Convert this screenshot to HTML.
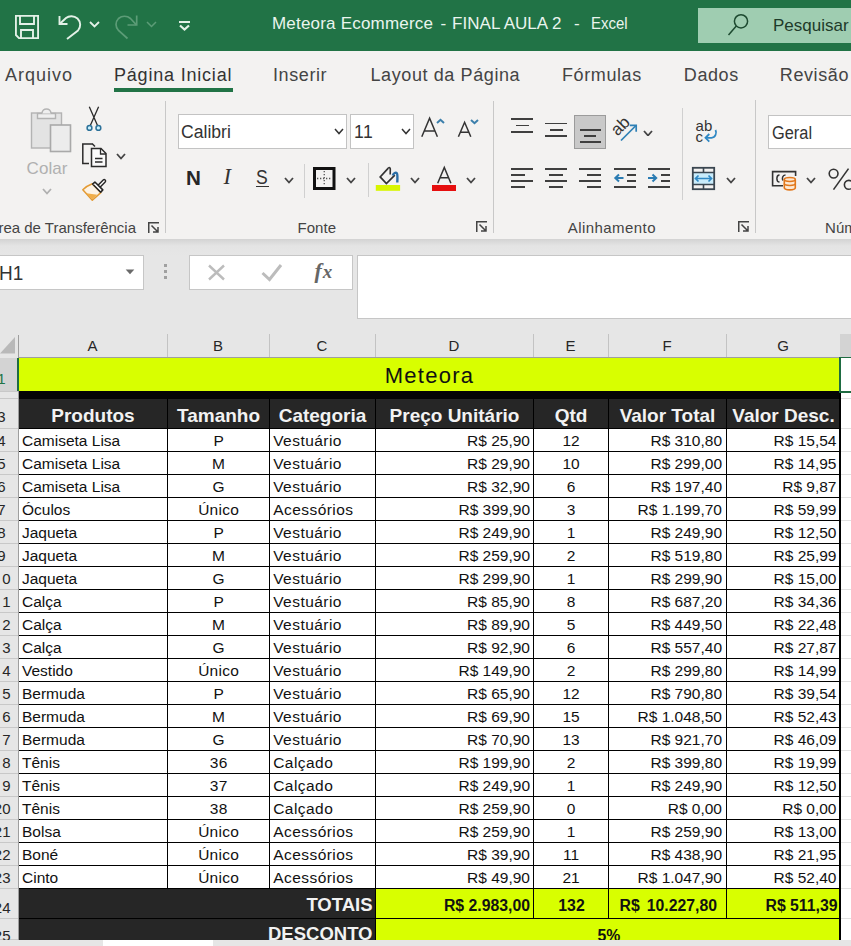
<!DOCTYPE html><html><head><meta charset="utf-8"><style>html,body{margin:0;padding:0;width:851px;height:946px;overflow:hidden;background:#fff;position:relative}</style></head><body><div style="position:absolute;left:0px;top:0px;width:851px;height:51px;background:#217346;"></div>
<svg style="position:absolute;left:15px;top:15px" width="24" height="24" viewBox="0 0 24 24" fill="none"><path d="M0.9 0.9 H23.1 V23.1 H4 L0.9 20 Z" stroke="#e3f1e7" stroke-width="1.9"/><path d="M5 1 V9 H19 V1" stroke="#e3f1e7" stroke-width="1.9"/><path d="M6 23 V15 H18 V23" stroke="#e3f1e7" stroke-width="1.9"/></svg>
<svg style="position:absolute;left:58px;top:14px" width="25" height="26" viewBox="0 0 25 26" fill="none"><path d="M1.5 2 V10 H9.5" stroke="#e3f1e7" stroke-width="1.9"/><path d="M1.8 9.8 L8 4 C11 1.5 16 1.5 19.5 4.5 C23 8 23 13 20 16.5 L9 25" stroke="#e3f1e7" stroke-width="1.9"/></svg>
<svg style="position:absolute;left:89px;top:21px" width="11" height="7" viewBox="0 0 11 7" fill="none"><path d="M1 1 L5.5 5.5 L10 1" stroke="#e3f1e7" stroke-width="1.8"/></svg>
<svg style="position:absolute;left:114px;top:14px" width="26" height="26" viewBox="0 0 26 26" fill="none"><path d="M22.7 1.5 V11 H13.5" stroke="#5c9c77" stroke-width="1.7"/><path d="M22.4 10.8 L16.5 4.5 C13 1.5 8 1.5 4.5 4.5 C1.2 8 1.2 13 4.5 16.5 L13.5 24.5" stroke="#5c9c77" stroke-width="1.7"/></svg>
<svg style="position:absolute;left:146px;top:21px" width="11" height="7" viewBox="0 0 11 7" fill="none"><path d="M1 1 L5.5 5.5 L10 1" stroke="#5c9c77" stroke-width="1.5"/></svg>
<svg style="position:absolute;left:178px;top:19px" width="13" height="13" viewBox="0 0 13 13" fill="none"><path d="M1 3 H12" stroke="#e3f1e7" stroke-width="2"/><path d="M2 6.5 L6.5 10.5 L11 6.5" stroke="#e3f1e7" stroke-width="2.2"/></svg>
<div style='position:absolute;top:15.31px;font-size:17px;line-height:17px;color:#eaf5ee;font-weight:400;white-space:pre;letter-spacing:0.2px;left:272px;font-family:"Liberation Sans", sans-serif;'>Meteora Ecommerce</div>
<div style='position:absolute;top:15.31px;font-size:17px;line-height:17px;color:#eaf5ee;font-weight:400;white-space:pre;left:440.5px;font-family:"Liberation Sans", sans-serif;'>-</div>
<div style='position:absolute;top:15.31px;font-size:17px;line-height:17px;color:#eaf5ee;font-weight:400;white-space:pre;letter-spacing:0.05px;left:452px;font-family:"Liberation Sans", sans-serif;'>FINAL AULA 2</div>
<div style='position:absolute;top:15.31px;font-size:17px;line-height:17px;color:#eaf5ee;font-weight:400;white-space:pre;left:574px;font-family:"Liberation Sans", sans-serif;'>-</div>
<div style='position:absolute;top:15.31px;font-size:17px;line-height:17px;color:#eaf5ee;font-weight:400;white-space:pre;left:591px;transform:scaleX(0.88);transform-origin:left top;font-family:"Liberation Sans", sans-serif;'>Excel</div>
<div style="position:absolute;left:698px;top:8px;width:153px;height:35px;background:#9fcdb1;"></div>
<svg style="position:absolute;left:726px;top:13px" width="24" height="24" viewBox="0 0 24 24" fill="none"><circle cx="15" cy="8.3" r="6.6" stroke="#1d4a30" stroke-width="1.5"/><path d="M10.3 13 L2.5 22" stroke="#1d4a30" stroke-width="1.5"/></svg>
<div style='position:absolute;top:17.31px;font-size:17px;line-height:17px;color:#1e3b2a;font-weight:400;white-space:pre;left:773px;font-family:"Liberation Sans", sans-serif;'>Pesquisar</div>
<div style="position:absolute;left:0px;top:51px;width:851px;height:188px;background:#f3f2f1;"></div>
<div style='position:absolute;top:65.76px;font-size:18px;line-height:18px;color:#444444;font-weight:400;white-space:pre;letter-spacing:1.0px;left:5px;font-family:"Liberation Sans", sans-serif;'>Arquivo</div>
<div style='position:absolute;top:65.76px;font-size:18px;line-height:18px;color:#333;font-weight:400;white-space:pre;letter-spacing:0.8px;left:114px;font-family:"Liberation Sans", sans-serif;'>Página Inicial</div>
<div style='position:absolute;top:65.76px;font-size:18px;line-height:18px;color:#444444;font-weight:400;white-space:pre;letter-spacing:0.6px;left:273px;font-family:"Liberation Sans", sans-serif;'>Inserir</div>
<div style='position:absolute;top:65.76px;font-size:18px;line-height:18px;color:#444444;font-weight:400;white-space:pre;letter-spacing:0.6px;left:370.5px;font-family:"Liberation Sans", sans-serif;'>Layout da Página</div>
<div style='position:absolute;top:65.76px;font-size:18px;line-height:18px;color:#444444;font-weight:400;white-space:pre;letter-spacing:0.6px;left:562px;font-family:"Liberation Sans", sans-serif;'>Fórmulas</div>
<div style='position:absolute;top:65.76px;font-size:18px;line-height:18px;color:#444444;font-weight:400;white-space:pre;letter-spacing:0.6px;left:683.8px;font-family:"Liberation Sans", sans-serif;'>Dados</div>
<div style='position:absolute;top:65.76px;font-size:18px;line-height:18px;color:#444444;font-weight:400;white-space:pre;letter-spacing:0.6px;left:779.8px;font-family:"Liberation Sans", sans-serif;'>Revisão</div>
<div style="position:absolute;left:114px;top:88px;width:118.5px;height:4px;background:#217346;"></div>
<svg style="position:absolute;left:29px;top:106px" width="44" height="47" viewBox="0 0 44 47" fill="none"><rect x="2.5" y="7" width="30" height="35" fill="#e3e3e3" stroke="#b3b3b3" stroke-width="1.4"/><path d="M8.5 7.5 H26.5 V12.5 H8.5 Z" fill="#efefef" stroke="#b3b3b3" stroke-width="1.4"/><path d="M13 7.5 C13 1.5 22 1.5 22 7.5" stroke="#b3b3b3" stroke-width="1.4" fill="#efefef"/><rect x="21.5" y="19" width="20" height="26.5" fill="#ececec" stroke="#a9a9a9" stroke-width="1.6"/></svg>
<div style='position:absolute;top:160.21px;font-size:17px;line-height:17px;color:#b0b0b0;font-weight:400;white-space:pre;letter-spacing:0.1px;left:26.5px;font-family:"Liberation Sans", sans-serif;'>Colar</div>
<svg style="position:absolute;left:41.5px;top:188px" width="10" height="6.5" viewBox="0 0 10 6.5" fill="none"><path d="M1 1 L5.0 5.5 L9 1" stroke="#b0b0b0" stroke-width="1.8"/></svg>
<svg style="position:absolute;left:85px;top:106px" width="18" height="26" viewBox="0 0 18 26" fill="none"><path d="M4.3 0.8 L12.4 19.2 M13.6 0.8 L5.4 19.2" stroke="#2a2a2a" stroke-width="1.3"/><circle cx="4.5" cy="21.9" r="2.4" fill="#c9f1ff" stroke="#2c7199" stroke-width="1.5"/><circle cx="13.4" cy="21.9" r="2.4" fill="#c9f1ff" stroke="#2c7199" stroke-width="1.5"/></svg>
<svg style="position:absolute;left:81px;top:142px" width="27" height="26" viewBox="0 0 27 26" fill="none"><path d="M12 2 H1.8 V21.5 H8" stroke="#2b2b2b" stroke-width="1.5"/><path d="M11.5 2 L14 4.5" stroke="#2b2b2b" stroke-width="1.5"/><path d="M10.5 6.5 H20 L25 11.5 V24.5 H10.5 Z" fill="#fafafa" stroke="#2b2b2b" stroke-width="1.5"/><path d="M19.5 6.5 V12 H25" stroke="#2b2b2b" stroke-width="1.3"/><path d="M14 16.5 H21.5 M14 20 H21.5" stroke="#2b2b2b" stroke-width="1.3"/></svg>
<svg style="position:absolute;left:115.5px;top:153px" width="10" height="6.5" viewBox="0 0 10 6.5" fill="none"><path d="M1 1 L5.0 5.5 L9 1" stroke="#444" stroke-width="1.8"/></svg>
<svg style="position:absolute;left:80px;top:176px" width="30" height="28" viewBox="0 0 30 28" fill="none"><path d="M12.3 7.8 C8 9.5 5 11.5 2.8 13.7 L12.3 24.3 L20.8 16.6 Z" fill="#fdf3e4" stroke="#e39a33" stroke-width="1.5" stroke-linejoin="round"/><path d="M6.5 17.2 L12.3 23.3 L17.2 18.8 Z" fill="#f1ae48"/><path d="M19.5 9.8 L24.2 5.0" stroke="#262626" stroke-width="4.2" stroke-linecap="round"/><path d="M19.5 9.8 L24.2 5.0" stroke="#fff" stroke-width="1.3" stroke-linecap="round"/><path d="M12.6 8.0 L14.9 6.0 L22.8 13.9 L20.7 16.2 Z" fill="#fff" stroke="#262626" stroke-width="1.6" stroke-linejoin="round"/></svg>
<div style='position:absolute;top:219.80px;font-size:15px;line-height:15px;color:#444;font-weight:400;white-space:pre;right:715px;font-family:"Liberation Sans", sans-serif;'>Área de Transferência</div>
<svg style="position:absolute;left:148px;top:221.5px" width="12" height="12" viewBox="0 0 12 12" fill="none"><path d="M0.75 11 V0.75 H11" stroke="#444" stroke-width="1.5"/><path d="M3.5 3.5 L10 10 M10 5 V10 H5" stroke="#444" stroke-width="1.5"/></svg>
<div style="position:absolute;left:165px;top:101px;width:1px;height:132px;background:#c8c8c8;"></div>
<div style="position:absolute;left:178px;top:114px;width:169px;height:35px;background:#ffffff;box-sizing:border-box;border:1px solid #c3c3c3;"></div>
<div style='position:absolute;top:124.10px;font-size:17.6px;line-height:17.6px;color:#333;font-weight:400;white-space:pre;left:181px;font-family:"Liberation Sans", sans-serif;'>Calibri</div>
<svg style="position:absolute;left:334px;top:128px" width="10" height="6.5" viewBox="0 0 10 6.5" fill="none"><path d="M1 1 L5.0 5.5 L9 1" stroke="#333" stroke-width="1.5"/></svg>
<div style="position:absolute;left:350px;top:114px;width:64px;height:35px;background:#ffffff;box-sizing:border-box;border:1px solid #c3c3c3;"></div>
<div style='position:absolute;top:123.60px;font-size:17.6px;line-height:17.6px;color:#333;font-weight:400;white-space:pre;letter-spacing:0.5px;left:354px;font-family:"Liberation Sans", sans-serif;'>11</div>
<svg style="position:absolute;left:400.5px;top:128px" width="10" height="6.5" viewBox="0 0 10 6.5" fill="none"><path d="M1 1 L5.0 5.5 L9 1" stroke="#333" stroke-width="1.5"/></svg>
<svg style="position:absolute;left:420px;top:116px" width="20" height="23" viewBox="0 0 20 23" fill="none"><path d="M1.8 20.7 L9.6 2.2 L17.4 20.7 M4.6 15 H14.7" stroke="#333" stroke-width="1.5"/></svg>
<svg style="position:absolute;left:436px;top:118px" width="9" height="7" viewBox="0 0 9 7" fill="none"><path d="M1 5 L4.5 1.8 L8 5" stroke="#3b7fab" stroke-width="2"/></svg>
<svg style="position:absolute;left:457px;top:120px" width="16" height="19" viewBox="0 0 16 19" fill="none"><path d="M1.4 16.7 L7.6 2.3 L13.8 16.7 M3.6 12.2 H11.6" stroke="#333" stroke-width="1.5"/></svg>
<svg style="position:absolute;left:470px;top:118px" width="9" height="7" viewBox="0 0 9 7" fill="none"><path d="M1 2 L4.5 5.2 L8 2" stroke="#3b7fab" stroke-width="2"/></svg>
<div style='position:absolute;top:167.56px;font-size:20.6px;line-height:20.6px;color:#262626;font-weight:700;white-space:pre;left:186px;font-family:"Liberation Sans", sans-serif;'>N</div>
<div style='position:absolute;top:165.95px;font-size:22.5px;line-height:22.5px;color:#333;font-weight:400;white-space:pre;left:223.5px;font-family:"Liberation Serif", serif;font-style:italic;'>I</div>
<div style='position:absolute;top:168.29px;font-size:19.5px;line-height:19.5px;color:#333;font-weight:400;white-space:pre;left:255.5px;transform:scaleX(0.9);transform-origin:left top;font-family:"Liberation Sans", sans-serif;'>S</div>
<div style="position:absolute;left:256px;top:185.6px;width:12.5px;height:1.8px;background:#333;"></div>
<svg style="position:absolute;left:283.5px;top:177px" width="10" height="6.5" viewBox="0 0 10 6.5" fill="none"><path d="M1 1 L5.0 5.5 L9 1" stroke="#444" stroke-width="1.8"/></svg>
<div style="position:absolute;left:304px;top:164px;width:1px;height:34px;background:#d0d0d0;"></div>
<svg style="position:absolute;left:312px;top:166px" width="25" height="25" viewBox="0 0 25 25" fill="none"><rect x="2.5" y="2.5" width="19.5" height="20" stroke="#111" stroke-width="3"/><path d="M12.25 5 V20 M5 12.5 H19.5" stroke="#555" stroke-width="1.3" stroke-dasharray="1.3 1.7"/></svg>
<svg style="position:absolute;left:345.5px;top:177px" width="10" height="6.5" viewBox="0 0 10 6.5" fill="none"><path d="M1 1 L5.0 5.5 L9 1" stroke="#444" stroke-width="1.8"/></svg>
<div style="position:absolute;left:367.5px;top:163px;width:1px;height:34px;background:#d0d0d0;"></div>
<svg style="position:absolute;left:374px;top:164px" width="28" height="28" viewBox="0 0 28 28" fill="none"><path d="M14.3 4.2 L6.2 12.9 L12.4 19.6 L20.8 11.2" stroke="#333" stroke-width="1.7" stroke-linejoin="miter"/><path d="M14.3 4.2 C15.3 3.2 16.3 3.6 16.3 5 L16.2 10.5" stroke="#333" stroke-width="1.6"/><path d="M18.8 11.5 C19.5 9 21.8 8 23 9.5 C23.6 10.5 23.5 14 23.3 18.5" stroke="#2b6ea6" stroke-width="2.4"/><rect x="1.8" y="21" width="24.3" height="5.8" fill="#d8f500"/></svg>
<svg style="position:absolute;left:409.5px;top:177px" width="10" height="6.5" viewBox="0 0 10 6.5" fill="none"><path d="M1 1 L5.0 5.5 L9 1" stroke="#444" stroke-width="1.8"/></svg>
<svg style="position:absolute;left:435px;top:165px" width="18" height="20" viewBox="0 0 18 20" fill="none"><path d="M2.7 18.3 L9.3 2.4 L15.9 18.3 M5.0 12.8 H13.6" stroke="#333" stroke-width="1.5"/></svg>
<div style="position:absolute;left:432px;top:185px;width:24px;height:5.8px;background:#e60f0f;"></div>
<svg style="position:absolute;left:465.5px;top:177px" width="10" height="6.5" viewBox="0 0 10 6.5" fill="none"><path d="M1 1 L5.0 5.5 L9 1" stroke="#444" stroke-width="1.8"/></svg>
<div style='position:absolute;top:219.90px;font-size:15px;line-height:15px;color:#444;font-weight:400;white-space:pre;letter-spacing:0.1px;left:297.4px;font-family:"Liberation Sans", sans-serif;'>Fonte</div>
<svg style="position:absolute;left:476px;top:221px" width="12" height="12" viewBox="0 0 12 12" fill="none"><path d="M0.75 11 V0.75 H11" stroke="#444" stroke-width="1.5"/><path d="M3.5 3.5 L10 10 M10 5 V10 H5" stroke="#444" stroke-width="1.5"/></svg>
<div style="position:absolute;left:493px;top:101px;width:1px;height:132px;background:#c8c8c8;"></div>
<div style="position:absolute;left:511px;top:118.2px;width:22px;height:1.6px;background:#3f3f3f;"></div>
<div style="position:absolute;left:515.5px;top:124.8px;width:13.0px;height:1.6px;background:#3f3f3f;"></div>
<div style="position:absolute;left:511px;top:131.2px;width:22px;height:1.6px;background:#3f3f3f;"></div>
<div style="position:absolute;left:545px;top:122.7px;width:22px;height:1.6px;background:#3f3f3f;"></div>
<div style="position:absolute;left:549.5px;top:129.2px;width:13.0px;height:1.6px;background:#3f3f3f;"></div>
<div style="position:absolute;left:545px;top:135.2px;width:22px;height:1.6px;background:#3f3f3f;"></div>
<div style="position:absolute;left:574px;top:115px;width:32px;height:33.5px;background:#c9c9c9;box-sizing:border-box;border:1px solid #9b9b9b;"></div>
<div style="position:absolute;left:579.5px;top:129.2px;width:21px;height:1.6px;background:#3f3f3f;"></div>
<div style="position:absolute;left:584.0px;top:135.2px;width:12.0px;height:1.6px;background:#3f3f3f;"></div>
<div style="position:absolute;left:579.5px;top:141.2px;width:21px;height:1.6px;background:#3f3f3f;"></div>
<svg style="position:absolute;left:610px;top:116px" width="32" height="28" viewBox="0 0 32 28" fill="none"><text x="0" y="0" transform="translate(7.6,20.6) rotate(-45)" font-family="Liberation Sans" font-size="17" fill="#333">ab</text><path d="M11 24.5 L26 9.5" stroke="#2f80b6" stroke-width="1.7"/><path d="M19.8 9.3 H26.2 V15.7" stroke="#2f80b6" stroke-width="1.7"/></svg>
<svg style="position:absolute;left:642.5px;top:129.5px" width="10" height="6.5" viewBox="0 0 10 6.5" fill="none"><path d="M1 1 L5.0 5.5 L9 1" stroke="#444" stroke-width="1.8"/></svg>
<div style="position:absolute;left:511px;top:168.2px;width:22px;height:1.6px;background:#3f3f3f;"></div>
<div style="position:absolute;left:511px;top:174.2px;width:14px;height:1.6px;background:#3f3f3f;"></div>
<div style="position:absolute;left:511px;top:180.2px;width:22px;height:1.6px;background:#3f3f3f;"></div>
<div style="position:absolute;left:511px;top:186.2px;width:14px;height:1.6px;background:#3f3f3f;"></div>
<div style="position:absolute;left:545px;top:168.2px;width:22px;height:1.6px;background:#3f3f3f;"></div>
<div style="position:absolute;left:549px;top:174.2px;width:14px;height:1.6px;background:#3f3f3f;"></div>
<div style="position:absolute;left:545px;top:180.2px;width:22px;height:1.6px;background:#3f3f3f;"></div>
<div style="position:absolute;left:549px;top:186.2px;width:14px;height:1.6px;background:#3f3f3f;"></div>
<div style="position:absolute;left:579px;top:168.2px;width:22px;height:1.6px;background:#3f3f3f;"></div>
<div style="position:absolute;left:587px;top:174.2px;width:14px;height:1.6px;background:#3f3f3f;"></div>
<div style="position:absolute;left:579px;top:180.2px;width:22px;height:1.6px;background:#3f3f3f;"></div>
<div style="position:absolute;left:587px;top:186.2px;width:14px;height:1.6px;background:#3f3f3f;"></div>
<div style="position:absolute;left:614px;top:168.2px;width:22px;height:1.6px;background:#3f3f3f;"></div>
<div style="position:absolute;left:626.5px;top:174.2px;width:9.5px;height:1.6px;background:#3f3f3f;"></div>
<div style="position:absolute;left:626.5px;top:180.2px;width:9.5px;height:1.6px;background:#3f3f3f;"></div>
<div style="position:absolute;left:614px;top:186.2px;width:22px;height:1.6px;background:#3f3f3f;"></div>
<svg style="position:absolute;left:613px;top:173px" width="12" height="10" viewBox="0 0 12 10" fill="none"><path d="M10.5 5 H2.5 M6 1.5 L2.3 5 L6 8.5" stroke="#2b7cb3" stroke-width="2"/></svg>
<div style="position:absolute;left:648px;top:168.2px;width:22px;height:1.6px;background:#3f3f3f;"></div>
<div style="position:absolute;left:660.5px;top:174.2px;width:9.5px;height:1.6px;background:#3f3f3f;"></div>
<div style="position:absolute;left:660.5px;top:180.2px;width:9.5px;height:1.6px;background:#3f3f3f;"></div>
<div style="position:absolute;left:648px;top:186.2px;width:22px;height:1.6px;background:#3f3f3f;"></div>
<svg style="position:absolute;left:647px;top:173px" width="12" height="10" viewBox="0 0 12 10" fill="none"><path d="M1 5 H9 M5.5 1.5 L9.2 5 L5.5 8.5" stroke="#2b7cb3" stroke-width="2"/></svg>
<div style="position:absolute;left:681.5px;top:108px;width:1px;height:92px;background:#d0d0d0;"></div>
<div style='position:absolute;top:117.80px;font-size:15px;line-height:15px;color:#333;font-weight:400;white-space:pre;letter-spacing:0.2px;left:695.5px;font-family:"Liberation Sans", sans-serif;'>ab</div>
<div style='position:absolute;top:128.80px;font-size:15px;line-height:15px;color:#333;font-weight:400;white-space:pre;left:695.5px;font-family:"Liberation Sans", sans-serif;'>c</div>
<svg style="position:absolute;left:703px;top:128px" width="15" height="16" viewBox="0 0 15 16" fill="none"><path d="M12.5 2 C14 5 12.5 9.5 8.5 9.8 H3" stroke="#2f88c4" stroke-width="1.8"/><path d="M6.3 6 L2.5 9.8 L6.3 13.6" stroke="#2f88c4" stroke-width="1.8"/></svg>
<svg style="position:absolute;left:691px;top:166px" width="25" height="25" viewBox="0 0 25 25" fill="none"><rect x="2" y="6.5" width="21" height="12" fill="#c9ecfb"/><rect x="1.8" y="1.8" width="21.4" height="21.4" stroke="#3a4650" stroke-width="1.8"/><path d="M2 6.5 H23 M2 18.5 H23 M12.5 2 V6.5 M12.5 18.5 V23" stroke="#3a4650" stroke-width="1.6"/><path d="M4.5 12.5 H20.5 M7.5 9.5 L4.5 12.5 L7.5 15.5 M17.5 9.5 L20.5 12.5 L17.5 15.5" stroke="#2f88c4" stroke-width="1.7"/></svg>
<svg style="position:absolute;left:725.5px;top:177px" width="10" height="6.5" viewBox="0 0 10 6.5" fill="none"><path d="M1 1 L5.0 5.5 L9 1" stroke="#444" stroke-width="1.8"/></svg>
<div style='position:absolute;top:219.90px;font-size:15px;line-height:15px;color:#444;font-weight:400;white-space:pre;letter-spacing:0.45px;left:567.7px;font-family:"Liberation Sans", sans-serif;'>Alinhamento</div>
<svg style="position:absolute;left:738px;top:221px" width="12" height="12" viewBox="0 0 12 12" fill="none"><path d="M0.75 11 V0.75 H11" stroke="#444" stroke-width="1.5"/><path d="M3.5 3.5 L10 10 M10 5 V10 H5" stroke="#444" stroke-width="1.5"/></svg>
<div style="position:absolute;left:755px;top:100px;width:1px;height:133px;background:#c8c8c8;"></div>
<div style="position:absolute;left:768px;top:115px;width:100px;height:34px;background:#ffffff;box-sizing:border-box;border:1px solid #c3c3c3;"></div>
<div style='position:absolute;top:124.50px;font-size:17.6px;line-height:17.6px;color:#333;font-weight:400;white-space:pre;left:771.5px;transform:scaleX(0.93);transform-origin:left top;font-family:"Liberation Sans", sans-serif;'>Geral</div>
<svg style="position:absolute;left:771px;top:170px" width="27" height="22" viewBox="0 0 27 22" fill="none"><path d="M12 15.8 H1.6 V1.6 H24.6 V6" stroke="#333" stroke-width="1.6"/><path d="M8.5 5 C5 5 5 12 8.5 12 M14.5 5 C11.3 5 11 8.5 11.8 10.5" stroke="#333" stroke-width="1.5"/><path d="M13.3 9.5 C13.3 6.8 24.3 6.8 24.3 9.5 V17.8 C24.3 20.5 13.3 20.5 13.3 17.8 Z" fill="#fde9d4" stroke="#e2781c" stroke-width="1.6"/><path d="M13.3 9.5 C13.3 12 24.3 12 24.3 9.5 M13.3 13.6 C13.3 16.1 24.3 16.1 24.3 13.6" stroke="#e2781c" stroke-width="1.5"/></svg>
<svg style="position:absolute;left:805.5px;top:177px" width="10" height="6.5" viewBox="0 0 10 6.5" fill="none"><path d="M1 1 L5.0 5.5 L9 1" stroke="#444" stroke-width="1.8"/></svg>
<svg style="position:absolute;left:826px;top:166px" width="30" height="26" viewBox="0 0 30 26" fill="none"><circle cx="7.6" cy="7.6" r="4.4" stroke="#333" stroke-width="1.6"/><path d="M22.5 2.6 L7.5 23.6" stroke="#333" stroke-width="1.6"/><circle cx="22.8" cy="18.8" r="4.4" stroke="#333" stroke-width="1.6"/></svg>
<div style='position:absolute;top:219.90px;font-size:15px;line-height:15px;color:#444;font-weight:400;white-space:pre;letter-spacing:0.1px;left:825px;font-family:"Liberation Sans", sans-serif;'>Núm</div>
<div style="position:absolute;left:0;top:239px;width:851px;height:17px;background:linear-gradient(#d3d3d3,#e4e4e4 40%,#e6e6e6)"></div>
<div style="position:absolute;left:0px;top:256px;width:851px;height:78px;background:#e6e6e6;"></div>
<div style="position:absolute;left:-2px;top:255px;width:146px;height:35px;background:#ffffff;box-sizing:border-box;border:1px solid #c6c6c6;"></div>
<div style='position:absolute;top:262.57px;font-size:20px;line-height:20px;color:#333;font-weight:400;white-space:pre;left:-1.5px;transform:scaleX(0.95);transform-origin:left top;font-family:"Liberation Sans", sans-serif;'>H1</div>
<svg style="position:absolute;left:125px;top:269px" width="10" height="6" viewBox="0 0 10 6" fill="none"><path d="M0.7 0.5 H9.3 L5 5.3 Z" fill="#6a6a6a"/></svg>
<div style="position:absolute;left:164px;top:264px;width:2.5px;height:3px;background:#a0a0a0;"></div>
<div style="position:absolute;left:164px;top:270px;width:2.5px;height:3px;background:#a0a0a0;"></div>
<div style="position:absolute;left:164px;top:276px;width:2.5px;height:3px;background:#a0a0a0;"></div>
<div style="position:absolute;left:189px;top:255px;width:164px;height:35px;background:#ffffff;box-sizing:border-box;border:1px solid #c6c6c6;"></div>
<svg style="position:absolute;left:207px;top:264px" width="19" height="17" viewBox="0 0 19 17" fill="none"><path d="M2 1.5 L17 15.5 M17 1.5 L2 15.5" stroke="#bcbcbc" stroke-width="2.4"/></svg>
<svg style="position:absolute;left:260px;top:263px" width="23" height="19" viewBox="0 0 23 19" fill="none"><path d="M2.5 10 L9.5 16.5 L21 2" stroke="#bcbcbc" stroke-width="3"/></svg>
<div style='position:absolute;top:260.38px;font-size:22px;line-height:22px;color:#666;font-weight:400;white-space:pre;left:314.5px;font-family:"Liberation Serif", serif;font-weight:700;font-style:italic;'>f<span style="font-size:19px;margin-left:1px">x</span></div>
<div style="position:absolute;left:357px;top:255px;width:500px;height:64px;background:#ffffff;box-sizing:border-box;border:1px solid #c6c6c6;"></div>
<div style="position:absolute;left:0px;top:334px;width:851px;height:24px;background:#e6e6e6;"></div>
<svg style="position:absolute;left:0px;top:337px" width="15" height="17" viewBox="0 0 15 17" fill="none"><path d="M15 0 V16.5 H0 Z" fill="#b9b9b9"/></svg>
<div style="position:absolute;left:18px;top:335px;width:1px;height:23px;background:#9e9e9e;"></div>
<div style='position:absolute;top:338.30px;font-size:15px;line-height:15px;color:#262626;font-weight:400;white-space:pre;left:-407.5px;width:1000px;text-align:center;font-family:"Liberation Sans", sans-serif;'>A</div>
<div style='position:absolute;top:338.30px;font-size:15px;line-height:15px;color:#262626;font-weight:400;white-space:pre;left:-282.0px;width:1000px;text-align:center;font-family:"Liberation Sans", sans-serif;'>B</div>
<div style='position:absolute;top:338.30px;font-size:15px;line-height:15px;color:#262626;font-weight:400;white-space:pre;left:-178.0px;width:1000px;text-align:center;font-family:"Liberation Sans", sans-serif;'>C</div>
<div style='position:absolute;top:338.30px;font-size:15px;line-height:15px;color:#262626;font-weight:400;white-space:pre;left:-46.0px;width:1000px;text-align:center;font-family:"Liberation Sans", sans-serif;'>D</div>
<div style='position:absolute;top:338.30px;font-size:15px;line-height:15px;color:#262626;font-weight:400;white-space:pre;left:70.5px;width:1000px;text-align:center;font-family:"Liberation Sans", sans-serif;'>E</div>
<div style='position:absolute;top:338.30px;font-size:15px;line-height:15px;color:#262626;font-weight:400;white-space:pre;left:167.0px;width:1000px;text-align:center;font-family:"Liberation Sans", sans-serif;'>F</div>
<div style='position:absolute;top:338.30px;font-size:15px;line-height:15px;color:#262626;font-weight:400;white-space:pre;left:283.0px;width:1000px;text-align:center;font-family:"Liberation Sans", sans-serif;'>G</div>
<div style="position:absolute;left:167px;top:334px;width:1px;height:23px;background:#c3c3c3;"></div>
<div style="position:absolute;left:269px;top:334px;width:1px;height:23px;background:#c3c3c3;"></div>
<div style="position:absolute;left:375px;top:334px;width:1px;height:23px;background:#c3c3c3;"></div>
<div style="position:absolute;left:533px;top:334px;width:1px;height:23px;background:#c3c3c3;"></div>
<div style="position:absolute;left:608px;top:334px;width:1px;height:23px;background:#c3c3c3;"></div>
<div style="position:absolute;left:726px;top:334px;width:1px;height:23px;background:#c3c3c3;"></div>
<div style="position:absolute;left:840px;top:334px;width:1px;height:23px;background:#c3c3c3;"></div>
<div style="position:absolute;left:840px;top:334px;width:11px;height:23px;background:#d3d3d3;"></div>
<div style="position:absolute;left:841px;top:357px;width:10px;height:1px;background:#1e6b41;"></div>
<div style="position:absolute;left:19px;top:357px;width:821px;height:1px;background:#9f9f9f;"></div>
<div style="position:absolute;left:0px;top:357px;width:18px;height:583px;background:#e6e6e6;"></div>
<div style="position:absolute;left:0px;top:358px;width:18px;height:33px;background:#d3d3d3;"></div>
<div style="position:absolute;left:17px;top:358px;width:2px;height:33px;background:#1e6b41;"></div>
<div style="position:absolute;left:0px;top:391px;width:18px;height:1px;background:#c8c8c8;"></div>
<div style='position:absolute;top:370.60px;font-size:15px;line-height:15px;color:#217346;font-weight:400;white-space:pre;right:845.5px;font-family:"Liberation Sans", sans-serif;'>1</div>
<div style="position:absolute;left:0px;top:398px;width:18px;height:1px;background:#c8c8c8;"></div>
<div style="position:absolute;left:0px;top:428px;width:18px;height:1px;background:#c8c8c8;"></div>
<div style='position:absolute;top:408.80px;font-size:15px;line-height:15px;color:#262626;font-weight:400;white-space:pre;right:845.5px;font-family:"Liberation Sans", sans-serif;'>3</div>
<div style="position:absolute;left:0px;top:451px;width:18px;height:1px;background:#c8c8c8;"></div>
<div style='position:absolute;top:433.30px;font-size:15px;line-height:15px;color:#262626;font-weight:400;white-space:pre;right:845.5px;font-family:"Liberation Sans", sans-serif;'>4</div>
<div style="position:absolute;left:0px;top:474px;width:18px;height:1px;background:#c8c8c8;"></div>
<div style='position:absolute;top:456.30px;font-size:15px;line-height:15px;color:#262626;font-weight:400;white-space:pre;right:845.5px;font-family:"Liberation Sans", sans-serif;'>5</div>
<div style="position:absolute;left:0px;top:497px;width:18px;height:1px;background:#c8c8c8;"></div>
<div style='position:absolute;top:479.30px;font-size:15px;line-height:15px;color:#262626;font-weight:400;white-space:pre;right:845.5px;font-family:"Liberation Sans", sans-serif;'>6</div>
<div style="position:absolute;left:0px;top:520px;width:18px;height:1px;background:#c8c8c8;"></div>
<div style='position:absolute;top:502.30px;font-size:15px;line-height:15px;color:#262626;font-weight:400;white-space:pre;right:845.5px;font-family:"Liberation Sans", sans-serif;'>7</div>
<div style="position:absolute;left:0px;top:543px;width:18px;height:1px;background:#c8c8c8;"></div>
<div style='position:absolute;top:525.30px;font-size:15px;line-height:15px;color:#262626;font-weight:400;white-space:pre;right:845.5px;font-family:"Liberation Sans", sans-serif;'>8</div>
<div style="position:absolute;left:0px;top:566px;width:18px;height:1px;background:#c8c8c8;"></div>
<div style='position:absolute;top:548.30px;font-size:15px;line-height:15px;color:#262626;font-weight:400;white-space:pre;right:845.5px;font-family:"Liberation Sans", sans-serif;'>9</div>
<div style="position:absolute;left:0px;top:589px;width:18px;height:1px;background:#c8c8c8;"></div>
<div style='position:absolute;top:571.30px;font-size:15px;line-height:15px;color:#262626;font-weight:400;white-space:pre;right:840.5px;font-family:"Liberation Sans", sans-serif;'>0</div>
<div style="position:absolute;left:0px;top:612px;width:18px;height:1px;background:#c8c8c8;"></div>
<div style='position:absolute;top:594.30px;font-size:15px;line-height:15px;color:#262626;font-weight:400;white-space:pre;right:840.5px;font-family:"Liberation Sans", sans-serif;'>1</div>
<div style="position:absolute;left:0px;top:635px;width:18px;height:1px;background:#c8c8c8;"></div>
<div style='position:absolute;top:617.30px;font-size:15px;line-height:15px;color:#262626;font-weight:400;white-space:pre;right:840.5px;font-family:"Liberation Sans", sans-serif;'>2</div>
<div style="position:absolute;left:0px;top:658px;width:18px;height:1px;background:#c8c8c8;"></div>
<div style='position:absolute;top:640.30px;font-size:15px;line-height:15px;color:#262626;font-weight:400;white-space:pre;right:840.5px;font-family:"Liberation Sans", sans-serif;'>3</div>
<div style="position:absolute;left:0px;top:681px;width:18px;height:1px;background:#c8c8c8;"></div>
<div style='position:absolute;top:663.30px;font-size:15px;line-height:15px;color:#262626;font-weight:400;white-space:pre;right:840.5px;font-family:"Liberation Sans", sans-serif;'>4</div>
<div style="position:absolute;left:0px;top:704px;width:18px;height:1px;background:#c8c8c8;"></div>
<div style='position:absolute;top:686.30px;font-size:15px;line-height:15px;color:#262626;font-weight:400;white-space:pre;right:840.5px;font-family:"Liberation Sans", sans-serif;'>5</div>
<div style="position:absolute;left:0px;top:727px;width:18px;height:1px;background:#c8c8c8;"></div>
<div style='position:absolute;top:709.30px;font-size:15px;line-height:15px;color:#262626;font-weight:400;white-space:pre;right:840.5px;font-family:"Liberation Sans", sans-serif;'>6</div>
<div style="position:absolute;left:0px;top:750px;width:18px;height:1px;background:#c8c8c8;"></div>
<div style='position:absolute;top:732.30px;font-size:15px;line-height:15px;color:#262626;font-weight:400;white-space:pre;right:840.5px;font-family:"Liberation Sans", sans-serif;'>7</div>
<div style="position:absolute;left:0px;top:773px;width:18px;height:1px;background:#c8c8c8;"></div>
<div style='position:absolute;top:755.30px;font-size:15px;line-height:15px;color:#262626;font-weight:400;white-space:pre;right:840.5px;font-family:"Liberation Sans", sans-serif;'>8</div>
<div style="position:absolute;left:0px;top:796px;width:18px;height:1px;background:#c8c8c8;"></div>
<div style='position:absolute;top:778.30px;font-size:15px;line-height:15px;color:#262626;font-weight:400;white-space:pre;right:840.5px;font-family:"Liberation Sans", sans-serif;'>9</div>
<div style="position:absolute;left:0px;top:819px;width:18px;height:1px;background:#c8c8c8;"></div>
<div style='position:absolute;top:801.30px;font-size:15px;line-height:15px;color:#262626;font-weight:400;white-space:pre;right:840.5px;font-family:"Liberation Sans", sans-serif;'>20</div>
<div style="position:absolute;left:0px;top:842px;width:18px;height:1px;background:#c8c8c8;"></div>
<div style='position:absolute;top:824.30px;font-size:15px;line-height:15px;color:#262626;font-weight:400;white-space:pre;right:840.5px;font-family:"Liberation Sans", sans-serif;'>21</div>
<div style="position:absolute;left:0px;top:865px;width:18px;height:1px;background:#c8c8c8;"></div>
<div style='position:absolute;top:847.30px;font-size:15px;line-height:15px;color:#262626;font-weight:400;white-space:pre;right:840.5px;font-family:"Liberation Sans", sans-serif;'>22</div>
<div style="position:absolute;left:0px;top:888px;width:18px;height:1px;background:#c8c8c8;"></div>
<div style='position:absolute;top:870.30px;font-size:15px;line-height:15px;color:#262626;font-weight:400;white-space:pre;right:840.5px;font-family:"Liberation Sans", sans-serif;'>23</div>
<div style="position:absolute;left:0px;top:918px;width:18px;height:1px;background:#c8c8c8;"></div>
<div style='position:absolute;top:899.80px;font-size:15px;line-height:15px;color:#262626;font-weight:400;white-space:pre;right:840.5px;font-family:"Liberation Sans", sans-serif;'>24</div>
<div style="position:absolute;left:0px;top:939px;width:18px;height:1px;background:#c8c8c8;"></div>
<div style='position:absolute;top:927.80px;font-size:15px;line-height:15px;color:#262626;font-weight:400;white-space:pre;right:840.5px;font-family:"Liberation Sans", sans-serif;'>25</div>
<div style="position:absolute;left:18px;top:357px;width:1px;height:583px;background:#9e9e9e;"></div>
<div style="position:absolute;left:17px;top:358px;width:2px;height:33px;background:#1e6b41;"></div>
<div style="position:absolute;left:19px;top:358px;width:821px;height:33px;background:#d8ff00;"></div>
<div style='position:absolute;top:365.28px;font-size:22px;line-height:22px;color:#111;font-weight:400;white-space:pre;letter-spacing:1.25px;left:-70.5px;width:1000px;text-align:center;font-family:"Liberation Sans", sans-serif;'>Meteora</div>
<div style="position:absolute;left:19px;top:391px;width:822px;height:8px;background:#050505;"></div>
<div style="position:absolute;left:19px;top:399px;width:822px;height:29px;background:#262626;"></div>
<div style="position:absolute;left:167px;top:399px;width:1px;height:30px;background:#000;"></div>
<div style="position:absolute;left:269px;top:399px;width:1px;height:30px;background:#000;"></div>
<div style="position:absolute;left:375px;top:399px;width:1px;height:30px;background:#000;"></div>
<div style="position:absolute;left:533px;top:399px;width:1px;height:30px;background:#000;"></div>
<div style="position:absolute;left:608px;top:399px;width:1px;height:30px;background:#000;"></div>
<div style="position:absolute;left:726px;top:399px;width:1px;height:30px;background:#000;"></div>
<div style='position:absolute;top:405.82px;font-size:19px;line-height:19px;color:#f2f2f2;font-weight:700;white-space:pre;left:-407.0px;width:1000px;text-align:center;font-family:"Liberation Sans", sans-serif;'>Produtos</div>
<div style='position:absolute;top:405.82px;font-size:19px;line-height:19px;color:#f2f2f2;font-weight:700;white-space:pre;left:-281.5px;width:1000px;text-align:center;font-family:"Liberation Sans", sans-serif;'>Tamanho</div>
<div style='position:absolute;top:405.82px;font-size:19px;line-height:19px;color:#f2f2f2;font-weight:700;white-space:pre;left:-177.5px;width:1000px;text-align:center;font-family:"Liberation Sans", sans-serif;'>Categoria</div>
<div style='position:absolute;top:405.82px;font-size:19px;line-height:19px;color:#f2f2f2;font-weight:700;white-space:pre;left:-45.5px;width:1000px;text-align:center;font-family:"Liberation Sans", sans-serif;'>Preço Unitário</div>
<div style='position:absolute;top:405.82px;font-size:19px;line-height:19px;color:#f2f2f2;font-weight:700;white-space:pre;left:71.0px;width:1000px;text-align:center;font-family:"Liberation Sans", sans-serif;'>Qtd</div>
<div style='position:absolute;top:405.82px;font-size:19px;line-height:19px;color:#f2f2f2;font-weight:700;white-space:pre;left:167.5px;width:1000px;text-align:center;font-family:"Liberation Sans", sans-serif;'>Valor Total</div>
<div style='position:absolute;top:405.82px;font-size:19px;line-height:19px;color:#f2f2f2;font-weight:700;white-space:pre;left:283.5px;width:1000px;text-align:center;font-family:"Liberation Sans", sans-serif;'>Valor Desc.</div>
<div style="position:absolute;left:19px;top:428px;width:821px;height:460px;background:#ffffff;"></div>
<div style='position:absolute;top:432.68px;font-size:15.5px;line-height:15.5px;color:#111;font-weight:400;white-space:pre;left:22px;font-family:"Liberation Sans", sans-serif;'>Camiseta Lisa</div>
<div style='position:absolute;top:432.68px;font-size:15.5px;line-height:15.5px;color:#111;font-weight:400;white-space:pre;letter-spacing:0.3px;left:-281.3px;width:1000px;text-align:center;font-family:"Liberation Sans", sans-serif;'>P</div>
<div style='position:absolute;top:432.68px;font-size:15.5px;line-height:15.5px;color:#111;font-weight:400;white-space:pre;letter-spacing:0.45px;left:273.2px;font-family:"Liberation Sans", sans-serif;'>Vestuário</div>
<div style='position:absolute;top:432.68px;font-size:15.5px;line-height:15.5px;color:#111;font-weight:400;white-space:pre;right:321px;font-family:"Liberation Sans", sans-serif;'>R$ 25,90</div>
<div style='position:absolute;top:432.68px;font-size:15.5px;line-height:15.5px;color:#111;font-weight:400;white-space:pre;left:71.0px;width:1000px;text-align:center;font-family:"Liberation Sans", sans-serif;'>12</div>
<div style='position:absolute;top:432.68px;font-size:15.5px;line-height:15.5px;color:#111;font-weight:400;white-space:pre;right:129px;font-family:"Liberation Sans", sans-serif;'>R$ 310,80</div>
<div style='position:absolute;top:432.68px;font-size:15.5px;line-height:15.5px;color:#111;font-weight:400;white-space:pre;right:14.5px;font-family:"Liberation Sans", sans-serif;'>R$ 15,54</div>
<div style='position:absolute;top:455.68px;font-size:15.5px;line-height:15.5px;color:#111;font-weight:400;white-space:pre;left:22px;font-family:"Liberation Sans", sans-serif;'>Camiseta Lisa</div>
<div style='position:absolute;top:455.68px;font-size:15.5px;line-height:15.5px;color:#111;font-weight:400;white-space:pre;letter-spacing:0.3px;left:-281.3px;width:1000px;text-align:center;font-family:"Liberation Sans", sans-serif;'>M</div>
<div style='position:absolute;top:455.68px;font-size:15.5px;line-height:15.5px;color:#111;font-weight:400;white-space:pre;letter-spacing:0.45px;left:273.2px;font-family:"Liberation Sans", sans-serif;'>Vestuário</div>
<div style='position:absolute;top:455.68px;font-size:15.5px;line-height:15.5px;color:#111;font-weight:400;white-space:pre;right:321px;font-family:"Liberation Sans", sans-serif;'>R$ 29,90</div>
<div style='position:absolute;top:455.68px;font-size:15.5px;line-height:15.5px;color:#111;font-weight:400;white-space:pre;left:71.0px;width:1000px;text-align:center;font-family:"Liberation Sans", sans-serif;'>10</div>
<div style='position:absolute;top:455.68px;font-size:15.5px;line-height:15.5px;color:#111;font-weight:400;white-space:pre;right:129px;font-family:"Liberation Sans", sans-serif;'>R$ 299,00</div>
<div style='position:absolute;top:455.68px;font-size:15.5px;line-height:15.5px;color:#111;font-weight:400;white-space:pre;right:14.5px;font-family:"Liberation Sans", sans-serif;'>R$ 14,95</div>
<div style='position:absolute;top:478.68px;font-size:15.5px;line-height:15.5px;color:#111;font-weight:400;white-space:pre;left:22px;font-family:"Liberation Sans", sans-serif;'>Camiseta Lisa</div>
<div style='position:absolute;top:478.68px;font-size:15.5px;line-height:15.5px;color:#111;font-weight:400;white-space:pre;letter-spacing:0.3px;left:-281.3px;width:1000px;text-align:center;font-family:"Liberation Sans", sans-serif;'>G</div>
<div style='position:absolute;top:478.68px;font-size:15.5px;line-height:15.5px;color:#111;font-weight:400;white-space:pre;letter-spacing:0.45px;left:273.2px;font-family:"Liberation Sans", sans-serif;'>Vestuário</div>
<div style='position:absolute;top:478.68px;font-size:15.5px;line-height:15.5px;color:#111;font-weight:400;white-space:pre;right:321px;font-family:"Liberation Sans", sans-serif;'>R$ 32,90</div>
<div style='position:absolute;top:478.68px;font-size:15.5px;line-height:15.5px;color:#111;font-weight:400;white-space:pre;left:71.0px;width:1000px;text-align:center;font-family:"Liberation Sans", sans-serif;'>6</div>
<div style='position:absolute;top:478.68px;font-size:15.5px;line-height:15.5px;color:#111;font-weight:400;white-space:pre;right:129px;font-family:"Liberation Sans", sans-serif;'>R$ 197,40</div>
<div style='position:absolute;top:478.68px;font-size:15.5px;line-height:15.5px;color:#111;font-weight:400;white-space:pre;right:14.5px;font-family:"Liberation Sans", sans-serif;'>R$ 9,87</div>
<div style='position:absolute;top:501.68px;font-size:15.5px;line-height:15.5px;color:#111;font-weight:400;white-space:pre;left:22px;font-family:"Liberation Sans", sans-serif;'>Óculos</div>
<div style='position:absolute;top:501.68px;font-size:15.5px;line-height:15.5px;color:#111;font-weight:400;white-space:pre;letter-spacing:0.3px;left:-281.3px;width:1000px;text-align:center;font-family:"Liberation Sans", sans-serif;'>Único</div>
<div style='position:absolute;top:501.68px;font-size:15.5px;line-height:15.5px;color:#111;font-weight:400;white-space:pre;letter-spacing:0.45px;left:273.2px;font-family:"Liberation Sans", sans-serif;'>Acessórios</div>
<div style='position:absolute;top:501.68px;font-size:15.5px;line-height:15.5px;color:#111;font-weight:400;white-space:pre;right:321px;font-family:"Liberation Sans", sans-serif;'>R$ 399,90</div>
<div style='position:absolute;top:501.68px;font-size:15.5px;line-height:15.5px;color:#111;font-weight:400;white-space:pre;left:71.0px;width:1000px;text-align:center;font-family:"Liberation Sans", sans-serif;'>3</div>
<div style='position:absolute;top:501.68px;font-size:15.5px;line-height:15.5px;color:#111;font-weight:400;white-space:pre;right:129px;font-family:"Liberation Sans", sans-serif;'>R$ 1.199,70</div>
<div style='position:absolute;top:501.68px;font-size:15.5px;line-height:15.5px;color:#111;font-weight:400;white-space:pre;right:14.5px;font-family:"Liberation Sans", sans-serif;'>R$ 59,99</div>
<div style='position:absolute;top:524.68px;font-size:15.5px;line-height:15.5px;color:#111;font-weight:400;white-space:pre;left:22px;font-family:"Liberation Sans", sans-serif;'>Jaqueta</div>
<div style='position:absolute;top:524.68px;font-size:15.5px;line-height:15.5px;color:#111;font-weight:400;white-space:pre;letter-spacing:0.3px;left:-281.3px;width:1000px;text-align:center;font-family:"Liberation Sans", sans-serif;'>P</div>
<div style='position:absolute;top:524.68px;font-size:15.5px;line-height:15.5px;color:#111;font-weight:400;white-space:pre;letter-spacing:0.45px;left:273.2px;font-family:"Liberation Sans", sans-serif;'>Vestuário</div>
<div style='position:absolute;top:524.68px;font-size:15.5px;line-height:15.5px;color:#111;font-weight:400;white-space:pre;right:321px;font-family:"Liberation Sans", sans-serif;'>R$ 249,90</div>
<div style='position:absolute;top:524.68px;font-size:15.5px;line-height:15.5px;color:#111;font-weight:400;white-space:pre;left:71.0px;width:1000px;text-align:center;font-family:"Liberation Sans", sans-serif;'>1</div>
<div style='position:absolute;top:524.68px;font-size:15.5px;line-height:15.5px;color:#111;font-weight:400;white-space:pre;right:129px;font-family:"Liberation Sans", sans-serif;'>R$ 249,90</div>
<div style='position:absolute;top:524.68px;font-size:15.5px;line-height:15.5px;color:#111;font-weight:400;white-space:pre;right:14.5px;font-family:"Liberation Sans", sans-serif;'>R$ 12,50</div>
<div style='position:absolute;top:547.68px;font-size:15.5px;line-height:15.5px;color:#111;font-weight:400;white-space:pre;left:22px;font-family:"Liberation Sans", sans-serif;'>Jaqueta</div>
<div style='position:absolute;top:547.68px;font-size:15.5px;line-height:15.5px;color:#111;font-weight:400;white-space:pre;letter-spacing:0.3px;left:-281.3px;width:1000px;text-align:center;font-family:"Liberation Sans", sans-serif;'>M</div>
<div style='position:absolute;top:547.68px;font-size:15.5px;line-height:15.5px;color:#111;font-weight:400;white-space:pre;letter-spacing:0.45px;left:273.2px;font-family:"Liberation Sans", sans-serif;'>Vestuário</div>
<div style='position:absolute;top:547.68px;font-size:15.5px;line-height:15.5px;color:#111;font-weight:400;white-space:pre;right:321px;font-family:"Liberation Sans", sans-serif;'>R$ 259,90</div>
<div style='position:absolute;top:547.68px;font-size:15.5px;line-height:15.5px;color:#111;font-weight:400;white-space:pre;left:71.0px;width:1000px;text-align:center;font-family:"Liberation Sans", sans-serif;'>2</div>
<div style='position:absolute;top:547.68px;font-size:15.5px;line-height:15.5px;color:#111;font-weight:400;white-space:pre;right:129px;font-family:"Liberation Sans", sans-serif;'>R$ 519,80</div>
<div style='position:absolute;top:547.68px;font-size:15.5px;line-height:15.5px;color:#111;font-weight:400;white-space:pre;right:14.5px;font-family:"Liberation Sans", sans-serif;'>R$ 25,99</div>
<div style='position:absolute;top:570.68px;font-size:15.5px;line-height:15.5px;color:#111;font-weight:400;white-space:pre;left:22px;font-family:"Liberation Sans", sans-serif;'>Jaqueta</div>
<div style='position:absolute;top:570.68px;font-size:15.5px;line-height:15.5px;color:#111;font-weight:400;white-space:pre;letter-spacing:0.3px;left:-281.3px;width:1000px;text-align:center;font-family:"Liberation Sans", sans-serif;'>G</div>
<div style='position:absolute;top:570.68px;font-size:15.5px;line-height:15.5px;color:#111;font-weight:400;white-space:pre;letter-spacing:0.45px;left:273.2px;font-family:"Liberation Sans", sans-serif;'>Vestuário</div>
<div style='position:absolute;top:570.68px;font-size:15.5px;line-height:15.5px;color:#111;font-weight:400;white-space:pre;right:321px;font-family:"Liberation Sans", sans-serif;'>R$ 299,90</div>
<div style='position:absolute;top:570.68px;font-size:15.5px;line-height:15.5px;color:#111;font-weight:400;white-space:pre;left:71.0px;width:1000px;text-align:center;font-family:"Liberation Sans", sans-serif;'>1</div>
<div style='position:absolute;top:570.68px;font-size:15.5px;line-height:15.5px;color:#111;font-weight:400;white-space:pre;right:129px;font-family:"Liberation Sans", sans-serif;'>R$ 299,90</div>
<div style='position:absolute;top:570.68px;font-size:15.5px;line-height:15.5px;color:#111;font-weight:400;white-space:pre;right:14.5px;font-family:"Liberation Sans", sans-serif;'>R$ 15,00</div>
<div style='position:absolute;top:593.68px;font-size:15.5px;line-height:15.5px;color:#111;font-weight:400;white-space:pre;left:22px;font-family:"Liberation Sans", sans-serif;'>Calça</div>
<div style='position:absolute;top:593.68px;font-size:15.5px;line-height:15.5px;color:#111;font-weight:400;white-space:pre;letter-spacing:0.3px;left:-281.3px;width:1000px;text-align:center;font-family:"Liberation Sans", sans-serif;'>P</div>
<div style='position:absolute;top:593.68px;font-size:15.5px;line-height:15.5px;color:#111;font-weight:400;white-space:pre;letter-spacing:0.45px;left:273.2px;font-family:"Liberation Sans", sans-serif;'>Vestuário</div>
<div style='position:absolute;top:593.68px;font-size:15.5px;line-height:15.5px;color:#111;font-weight:400;white-space:pre;right:321px;font-family:"Liberation Sans", sans-serif;'>R$ 85,90</div>
<div style='position:absolute;top:593.68px;font-size:15.5px;line-height:15.5px;color:#111;font-weight:400;white-space:pre;left:71.0px;width:1000px;text-align:center;font-family:"Liberation Sans", sans-serif;'>8</div>
<div style='position:absolute;top:593.68px;font-size:15.5px;line-height:15.5px;color:#111;font-weight:400;white-space:pre;right:129px;font-family:"Liberation Sans", sans-serif;'>R$ 687,20</div>
<div style='position:absolute;top:593.68px;font-size:15.5px;line-height:15.5px;color:#111;font-weight:400;white-space:pre;right:14.5px;font-family:"Liberation Sans", sans-serif;'>R$ 34,36</div>
<div style='position:absolute;top:616.68px;font-size:15.5px;line-height:15.5px;color:#111;font-weight:400;white-space:pre;left:22px;font-family:"Liberation Sans", sans-serif;'>Calça</div>
<div style='position:absolute;top:616.68px;font-size:15.5px;line-height:15.5px;color:#111;font-weight:400;white-space:pre;letter-spacing:0.3px;left:-281.3px;width:1000px;text-align:center;font-family:"Liberation Sans", sans-serif;'>M</div>
<div style='position:absolute;top:616.68px;font-size:15.5px;line-height:15.5px;color:#111;font-weight:400;white-space:pre;letter-spacing:0.45px;left:273.2px;font-family:"Liberation Sans", sans-serif;'>Vestuário</div>
<div style='position:absolute;top:616.68px;font-size:15.5px;line-height:15.5px;color:#111;font-weight:400;white-space:pre;right:321px;font-family:"Liberation Sans", sans-serif;'>R$ 89,90</div>
<div style='position:absolute;top:616.68px;font-size:15.5px;line-height:15.5px;color:#111;font-weight:400;white-space:pre;left:71.0px;width:1000px;text-align:center;font-family:"Liberation Sans", sans-serif;'>5</div>
<div style='position:absolute;top:616.68px;font-size:15.5px;line-height:15.5px;color:#111;font-weight:400;white-space:pre;right:129px;font-family:"Liberation Sans", sans-serif;'>R$ 449,50</div>
<div style='position:absolute;top:616.68px;font-size:15.5px;line-height:15.5px;color:#111;font-weight:400;white-space:pre;right:14.5px;font-family:"Liberation Sans", sans-serif;'>R$ 22,48</div>
<div style='position:absolute;top:639.68px;font-size:15.5px;line-height:15.5px;color:#111;font-weight:400;white-space:pre;left:22px;font-family:"Liberation Sans", sans-serif;'>Calça</div>
<div style='position:absolute;top:639.68px;font-size:15.5px;line-height:15.5px;color:#111;font-weight:400;white-space:pre;letter-spacing:0.3px;left:-281.3px;width:1000px;text-align:center;font-family:"Liberation Sans", sans-serif;'>G</div>
<div style='position:absolute;top:639.68px;font-size:15.5px;line-height:15.5px;color:#111;font-weight:400;white-space:pre;letter-spacing:0.45px;left:273.2px;font-family:"Liberation Sans", sans-serif;'>Vestuário</div>
<div style='position:absolute;top:639.68px;font-size:15.5px;line-height:15.5px;color:#111;font-weight:400;white-space:pre;right:321px;font-family:"Liberation Sans", sans-serif;'>R$ 92,90</div>
<div style='position:absolute;top:639.68px;font-size:15.5px;line-height:15.5px;color:#111;font-weight:400;white-space:pre;left:71.0px;width:1000px;text-align:center;font-family:"Liberation Sans", sans-serif;'>6</div>
<div style='position:absolute;top:639.68px;font-size:15.5px;line-height:15.5px;color:#111;font-weight:400;white-space:pre;right:129px;font-family:"Liberation Sans", sans-serif;'>R$ 557,40</div>
<div style='position:absolute;top:639.68px;font-size:15.5px;line-height:15.5px;color:#111;font-weight:400;white-space:pre;right:14.5px;font-family:"Liberation Sans", sans-serif;'>R$ 27,87</div>
<div style='position:absolute;top:662.68px;font-size:15.5px;line-height:15.5px;color:#111;font-weight:400;white-space:pre;left:22px;font-family:"Liberation Sans", sans-serif;'>Vestido</div>
<div style='position:absolute;top:662.68px;font-size:15.5px;line-height:15.5px;color:#111;font-weight:400;white-space:pre;letter-spacing:0.3px;left:-281.3px;width:1000px;text-align:center;font-family:"Liberation Sans", sans-serif;'>Único</div>
<div style='position:absolute;top:662.68px;font-size:15.5px;line-height:15.5px;color:#111;font-weight:400;white-space:pre;letter-spacing:0.45px;left:273.2px;font-family:"Liberation Sans", sans-serif;'>Vestuário</div>
<div style='position:absolute;top:662.68px;font-size:15.5px;line-height:15.5px;color:#111;font-weight:400;white-space:pre;right:321px;font-family:"Liberation Sans", sans-serif;'>R$ 149,90</div>
<div style='position:absolute;top:662.68px;font-size:15.5px;line-height:15.5px;color:#111;font-weight:400;white-space:pre;left:71.0px;width:1000px;text-align:center;font-family:"Liberation Sans", sans-serif;'>2</div>
<div style='position:absolute;top:662.68px;font-size:15.5px;line-height:15.5px;color:#111;font-weight:400;white-space:pre;right:129px;font-family:"Liberation Sans", sans-serif;'>R$ 299,80</div>
<div style='position:absolute;top:662.68px;font-size:15.5px;line-height:15.5px;color:#111;font-weight:400;white-space:pre;right:14.5px;font-family:"Liberation Sans", sans-serif;'>R$ 14,99</div>
<div style='position:absolute;top:685.68px;font-size:15.5px;line-height:15.5px;color:#111;font-weight:400;white-space:pre;left:22px;font-family:"Liberation Sans", sans-serif;'>Bermuda</div>
<div style='position:absolute;top:685.68px;font-size:15.5px;line-height:15.5px;color:#111;font-weight:400;white-space:pre;letter-spacing:0.3px;left:-281.3px;width:1000px;text-align:center;font-family:"Liberation Sans", sans-serif;'>P</div>
<div style='position:absolute;top:685.68px;font-size:15.5px;line-height:15.5px;color:#111;font-weight:400;white-space:pre;letter-spacing:0.45px;left:273.2px;font-family:"Liberation Sans", sans-serif;'>Vestuário</div>
<div style='position:absolute;top:685.68px;font-size:15.5px;line-height:15.5px;color:#111;font-weight:400;white-space:pre;right:321px;font-family:"Liberation Sans", sans-serif;'>R$ 65,90</div>
<div style='position:absolute;top:685.68px;font-size:15.5px;line-height:15.5px;color:#111;font-weight:400;white-space:pre;left:71.0px;width:1000px;text-align:center;font-family:"Liberation Sans", sans-serif;'>12</div>
<div style='position:absolute;top:685.68px;font-size:15.5px;line-height:15.5px;color:#111;font-weight:400;white-space:pre;right:129px;font-family:"Liberation Sans", sans-serif;'>R$ 790,80</div>
<div style='position:absolute;top:685.68px;font-size:15.5px;line-height:15.5px;color:#111;font-weight:400;white-space:pre;right:14.5px;font-family:"Liberation Sans", sans-serif;'>R$ 39,54</div>
<div style='position:absolute;top:708.68px;font-size:15.5px;line-height:15.5px;color:#111;font-weight:400;white-space:pre;left:22px;font-family:"Liberation Sans", sans-serif;'>Bermuda</div>
<div style='position:absolute;top:708.68px;font-size:15.5px;line-height:15.5px;color:#111;font-weight:400;white-space:pre;letter-spacing:0.3px;left:-281.3px;width:1000px;text-align:center;font-family:"Liberation Sans", sans-serif;'>M</div>
<div style='position:absolute;top:708.68px;font-size:15.5px;line-height:15.5px;color:#111;font-weight:400;white-space:pre;letter-spacing:0.45px;left:273.2px;font-family:"Liberation Sans", sans-serif;'>Vestuário</div>
<div style='position:absolute;top:708.68px;font-size:15.5px;line-height:15.5px;color:#111;font-weight:400;white-space:pre;right:321px;font-family:"Liberation Sans", sans-serif;'>R$ 69,90</div>
<div style='position:absolute;top:708.68px;font-size:15.5px;line-height:15.5px;color:#111;font-weight:400;white-space:pre;left:71.0px;width:1000px;text-align:center;font-family:"Liberation Sans", sans-serif;'>15</div>
<div style='position:absolute;top:708.68px;font-size:15.5px;line-height:15.5px;color:#111;font-weight:400;white-space:pre;right:129px;font-family:"Liberation Sans", sans-serif;'>R$ 1.048,50</div>
<div style='position:absolute;top:708.68px;font-size:15.5px;line-height:15.5px;color:#111;font-weight:400;white-space:pre;right:14.5px;font-family:"Liberation Sans", sans-serif;'>R$ 52,43</div>
<div style='position:absolute;top:731.68px;font-size:15.5px;line-height:15.5px;color:#111;font-weight:400;white-space:pre;left:22px;font-family:"Liberation Sans", sans-serif;'>Bermuda</div>
<div style='position:absolute;top:731.68px;font-size:15.5px;line-height:15.5px;color:#111;font-weight:400;white-space:pre;letter-spacing:0.3px;left:-281.3px;width:1000px;text-align:center;font-family:"Liberation Sans", sans-serif;'>G</div>
<div style='position:absolute;top:731.68px;font-size:15.5px;line-height:15.5px;color:#111;font-weight:400;white-space:pre;letter-spacing:0.45px;left:273.2px;font-family:"Liberation Sans", sans-serif;'>Vestuário</div>
<div style='position:absolute;top:731.68px;font-size:15.5px;line-height:15.5px;color:#111;font-weight:400;white-space:pre;right:321px;font-family:"Liberation Sans", sans-serif;'>R$ 70,90</div>
<div style='position:absolute;top:731.68px;font-size:15.5px;line-height:15.5px;color:#111;font-weight:400;white-space:pre;left:71.0px;width:1000px;text-align:center;font-family:"Liberation Sans", sans-serif;'>13</div>
<div style='position:absolute;top:731.68px;font-size:15.5px;line-height:15.5px;color:#111;font-weight:400;white-space:pre;right:129px;font-family:"Liberation Sans", sans-serif;'>R$ 921,70</div>
<div style='position:absolute;top:731.68px;font-size:15.5px;line-height:15.5px;color:#111;font-weight:400;white-space:pre;right:14.5px;font-family:"Liberation Sans", sans-serif;'>R$ 46,09</div>
<div style='position:absolute;top:754.68px;font-size:15.5px;line-height:15.5px;color:#111;font-weight:400;white-space:pre;left:22px;font-family:"Liberation Sans", sans-serif;'>Tênis</div>
<div style='position:absolute;top:754.68px;font-size:15.5px;line-height:15.5px;color:#111;font-weight:400;white-space:pre;letter-spacing:0.3px;left:-281.3px;width:1000px;text-align:center;font-family:"Liberation Sans", sans-serif;'>36</div>
<div style='position:absolute;top:754.68px;font-size:15.5px;line-height:15.5px;color:#111;font-weight:400;white-space:pre;letter-spacing:0.45px;left:273.2px;font-family:"Liberation Sans", sans-serif;'>Calçado</div>
<div style='position:absolute;top:754.68px;font-size:15.5px;line-height:15.5px;color:#111;font-weight:400;white-space:pre;right:321px;font-family:"Liberation Sans", sans-serif;'>R$ 199,90</div>
<div style='position:absolute;top:754.68px;font-size:15.5px;line-height:15.5px;color:#111;font-weight:400;white-space:pre;left:71.0px;width:1000px;text-align:center;font-family:"Liberation Sans", sans-serif;'>2</div>
<div style='position:absolute;top:754.68px;font-size:15.5px;line-height:15.5px;color:#111;font-weight:400;white-space:pre;right:129px;font-family:"Liberation Sans", sans-serif;'>R$ 399,80</div>
<div style='position:absolute;top:754.68px;font-size:15.5px;line-height:15.5px;color:#111;font-weight:400;white-space:pre;right:14.5px;font-family:"Liberation Sans", sans-serif;'>R$ 19,99</div>
<div style='position:absolute;top:777.68px;font-size:15.5px;line-height:15.5px;color:#111;font-weight:400;white-space:pre;left:22px;font-family:"Liberation Sans", sans-serif;'>Tênis</div>
<div style='position:absolute;top:777.68px;font-size:15.5px;line-height:15.5px;color:#111;font-weight:400;white-space:pre;letter-spacing:0.3px;left:-281.3px;width:1000px;text-align:center;font-family:"Liberation Sans", sans-serif;'>37</div>
<div style='position:absolute;top:777.68px;font-size:15.5px;line-height:15.5px;color:#111;font-weight:400;white-space:pre;letter-spacing:0.45px;left:273.2px;font-family:"Liberation Sans", sans-serif;'>Calçado</div>
<div style='position:absolute;top:777.68px;font-size:15.5px;line-height:15.5px;color:#111;font-weight:400;white-space:pre;right:321px;font-family:"Liberation Sans", sans-serif;'>R$ 249,90</div>
<div style='position:absolute;top:777.68px;font-size:15.5px;line-height:15.5px;color:#111;font-weight:400;white-space:pre;left:71.0px;width:1000px;text-align:center;font-family:"Liberation Sans", sans-serif;'>1</div>
<div style='position:absolute;top:777.68px;font-size:15.5px;line-height:15.5px;color:#111;font-weight:400;white-space:pre;right:129px;font-family:"Liberation Sans", sans-serif;'>R$ 249,90</div>
<div style='position:absolute;top:777.68px;font-size:15.5px;line-height:15.5px;color:#111;font-weight:400;white-space:pre;right:14.5px;font-family:"Liberation Sans", sans-serif;'>R$ 12,50</div>
<div style='position:absolute;top:800.68px;font-size:15.5px;line-height:15.5px;color:#111;font-weight:400;white-space:pre;left:22px;font-family:"Liberation Sans", sans-serif;'>Tênis</div>
<div style='position:absolute;top:800.68px;font-size:15.5px;line-height:15.5px;color:#111;font-weight:400;white-space:pre;letter-spacing:0.3px;left:-281.3px;width:1000px;text-align:center;font-family:"Liberation Sans", sans-serif;'>38</div>
<div style='position:absolute;top:800.68px;font-size:15.5px;line-height:15.5px;color:#111;font-weight:400;white-space:pre;letter-spacing:0.45px;left:273.2px;font-family:"Liberation Sans", sans-serif;'>Calçado</div>
<div style='position:absolute;top:800.68px;font-size:15.5px;line-height:15.5px;color:#111;font-weight:400;white-space:pre;right:321px;font-family:"Liberation Sans", sans-serif;'>R$ 259,90</div>
<div style='position:absolute;top:800.68px;font-size:15.5px;line-height:15.5px;color:#111;font-weight:400;white-space:pre;left:71.0px;width:1000px;text-align:center;font-family:"Liberation Sans", sans-serif;'>0</div>
<div style='position:absolute;top:800.68px;font-size:15.5px;line-height:15.5px;color:#111;font-weight:400;white-space:pre;right:129px;font-family:"Liberation Sans", sans-serif;'>R$ 0,00</div>
<div style='position:absolute;top:800.68px;font-size:15.5px;line-height:15.5px;color:#111;font-weight:400;white-space:pre;right:14.5px;font-family:"Liberation Sans", sans-serif;'>R$ 0,00</div>
<div style='position:absolute;top:823.68px;font-size:15.5px;line-height:15.5px;color:#111;font-weight:400;white-space:pre;left:22px;font-family:"Liberation Sans", sans-serif;'>Bolsa</div>
<div style='position:absolute;top:823.68px;font-size:15.5px;line-height:15.5px;color:#111;font-weight:400;white-space:pre;letter-spacing:0.3px;left:-281.3px;width:1000px;text-align:center;font-family:"Liberation Sans", sans-serif;'>Único</div>
<div style='position:absolute;top:823.68px;font-size:15.5px;line-height:15.5px;color:#111;font-weight:400;white-space:pre;letter-spacing:0.45px;left:273.2px;font-family:"Liberation Sans", sans-serif;'>Acessórios</div>
<div style='position:absolute;top:823.68px;font-size:15.5px;line-height:15.5px;color:#111;font-weight:400;white-space:pre;right:321px;font-family:"Liberation Sans", sans-serif;'>R$ 259,90</div>
<div style='position:absolute;top:823.68px;font-size:15.5px;line-height:15.5px;color:#111;font-weight:400;white-space:pre;left:71.0px;width:1000px;text-align:center;font-family:"Liberation Sans", sans-serif;'>1</div>
<div style='position:absolute;top:823.68px;font-size:15.5px;line-height:15.5px;color:#111;font-weight:400;white-space:pre;right:129px;font-family:"Liberation Sans", sans-serif;'>R$ 259,90</div>
<div style='position:absolute;top:823.68px;font-size:15.5px;line-height:15.5px;color:#111;font-weight:400;white-space:pre;right:14.5px;font-family:"Liberation Sans", sans-serif;'>R$ 13,00</div>
<div style='position:absolute;top:846.68px;font-size:15.5px;line-height:15.5px;color:#111;font-weight:400;white-space:pre;left:22px;font-family:"Liberation Sans", sans-serif;'>Boné</div>
<div style='position:absolute;top:846.68px;font-size:15.5px;line-height:15.5px;color:#111;font-weight:400;white-space:pre;letter-spacing:0.3px;left:-281.3px;width:1000px;text-align:center;font-family:"Liberation Sans", sans-serif;'>Único</div>
<div style='position:absolute;top:846.68px;font-size:15.5px;line-height:15.5px;color:#111;font-weight:400;white-space:pre;letter-spacing:0.45px;left:273.2px;font-family:"Liberation Sans", sans-serif;'>Acessórios</div>
<div style='position:absolute;top:846.68px;font-size:15.5px;line-height:15.5px;color:#111;font-weight:400;white-space:pre;right:321px;font-family:"Liberation Sans", sans-serif;'>R$ 39,90</div>
<div style='position:absolute;top:846.68px;font-size:15.5px;line-height:15.5px;color:#111;font-weight:400;white-space:pre;left:71.0px;width:1000px;text-align:center;font-family:"Liberation Sans", sans-serif;'>11</div>
<div style='position:absolute;top:846.68px;font-size:15.5px;line-height:15.5px;color:#111;font-weight:400;white-space:pre;right:129px;font-family:"Liberation Sans", sans-serif;'>R$ 438,90</div>
<div style='position:absolute;top:846.68px;font-size:15.5px;line-height:15.5px;color:#111;font-weight:400;white-space:pre;right:14.5px;font-family:"Liberation Sans", sans-serif;'>R$ 21,95</div>
<div style='position:absolute;top:869.68px;font-size:15.5px;line-height:15.5px;color:#111;font-weight:400;white-space:pre;left:22px;font-family:"Liberation Sans", sans-serif;'>Cinto</div>
<div style='position:absolute;top:869.68px;font-size:15.5px;line-height:15.5px;color:#111;font-weight:400;white-space:pre;letter-spacing:0.3px;left:-281.3px;width:1000px;text-align:center;font-family:"Liberation Sans", sans-serif;'>Único</div>
<div style='position:absolute;top:869.68px;font-size:15.5px;line-height:15.5px;color:#111;font-weight:400;white-space:pre;letter-spacing:0.45px;left:273.2px;font-family:"Liberation Sans", sans-serif;'>Acessórios</div>
<div style='position:absolute;top:869.68px;font-size:15.5px;line-height:15.5px;color:#111;font-weight:400;white-space:pre;right:321px;font-family:"Liberation Sans", sans-serif;'>R$ 49,90</div>
<div style='position:absolute;top:869.68px;font-size:15.5px;line-height:15.5px;color:#111;font-weight:400;white-space:pre;left:71.0px;width:1000px;text-align:center;font-family:"Liberation Sans", sans-serif;'>21</div>
<div style='position:absolute;top:869.68px;font-size:15.5px;line-height:15.5px;color:#111;font-weight:400;white-space:pre;right:129px;font-family:"Liberation Sans", sans-serif;'>R$ 1.047,90</div>
<div style='position:absolute;top:869.68px;font-size:15.5px;line-height:15.5px;color:#111;font-weight:400;white-space:pre;right:14.5px;font-family:"Liberation Sans", sans-serif;'>R$ 52,40</div>
<div style="position:absolute;left:19px;top:428px;width:821px;height:1px;background:#000;"></div>
<div style="position:absolute;left:19px;top:451px;width:821px;height:1px;background:#000;"></div>
<div style="position:absolute;left:19px;top:474px;width:821px;height:1px;background:#000;"></div>
<div style="position:absolute;left:19px;top:497px;width:821px;height:1px;background:#000;"></div>
<div style="position:absolute;left:19px;top:520px;width:821px;height:1px;background:#000;"></div>
<div style="position:absolute;left:19px;top:543px;width:821px;height:1px;background:#000;"></div>
<div style="position:absolute;left:19px;top:566px;width:821px;height:1px;background:#000;"></div>
<div style="position:absolute;left:19px;top:589px;width:821px;height:1px;background:#000;"></div>
<div style="position:absolute;left:19px;top:612px;width:821px;height:1px;background:#000;"></div>
<div style="position:absolute;left:19px;top:635px;width:821px;height:1px;background:#000;"></div>
<div style="position:absolute;left:19px;top:658px;width:821px;height:1px;background:#000;"></div>
<div style="position:absolute;left:19px;top:681px;width:821px;height:1px;background:#000;"></div>
<div style="position:absolute;left:19px;top:704px;width:821px;height:1px;background:#000;"></div>
<div style="position:absolute;left:19px;top:727px;width:821px;height:1px;background:#000;"></div>
<div style="position:absolute;left:19px;top:750px;width:821px;height:1px;background:#000;"></div>
<div style="position:absolute;left:19px;top:773px;width:821px;height:1px;background:#000;"></div>
<div style="position:absolute;left:19px;top:796px;width:821px;height:1px;background:#000;"></div>
<div style="position:absolute;left:19px;top:819px;width:821px;height:1px;background:#000;"></div>
<div style="position:absolute;left:19px;top:842px;width:821px;height:1px;background:#000;"></div>
<div style="position:absolute;left:19px;top:865px;width:821px;height:1px;background:#000;"></div>
<div style="position:absolute;left:19px;top:888px;width:821px;height:1px;background:#000;"></div>
<div style="position:absolute;left:167px;top:428px;width:1px;height:460px;background:#000;"></div>
<div style="position:absolute;left:269px;top:428px;width:1px;height:460px;background:#000;"></div>
<div style="position:absolute;left:375px;top:428px;width:1px;height:460px;background:#000;"></div>
<div style="position:absolute;left:533px;top:428px;width:1px;height:460px;background:#000;"></div>
<div style="position:absolute;left:608px;top:428px;width:1px;height:460px;background:#000;"></div>
<div style="position:absolute;left:726px;top:428px;width:1px;height:460px;background:#000;"></div>
<div style="position:absolute;left:19px;top:889px;width:356px;height:51px;background:#262626;"></div>
<div style="position:absolute;left:376px;top:889px;width:463px;height:51px;background:#d8ff00;"></div>
<div style="position:absolute;left:19px;top:918px;width:821px;height:1px;background:#000;"></div>
<div style="position:absolute;left:375px;top:889px;width:1px;height:29px;background:#000;"></div>
<div style="position:absolute;left:533px;top:889px;width:1px;height:29px;background:#000;"></div>
<div style="position:absolute;left:608px;top:889px;width:1px;height:29px;background:#000;"></div>
<div style="position:absolute;left:726px;top:889px;width:1px;height:29px;background:#000;"></div>
<div style="position:absolute;left:375px;top:918px;width:1px;height:22px;background:#000;"></div>
<div style='position:absolute;top:896.14px;font-size:18.5px;line-height:18.5px;color:#f2f2f2;font-weight:700;white-space:pre;right:478.5px;font-family:"Liberation Sans", sans-serif;'>TOTAIS</div>
<div style='position:absolute;top:924.84px;font-size:18.5px;line-height:18.5px;color:#f2f2f2;font-weight:700;white-space:pre;right:478.5px;font-family:"Liberation Sans", sans-serif;'>DESCONTO</div>
<div style='position:absolute;top:898.43px;font-size:15.8px;line-height:15.8px;color:#111;font-weight:700;white-space:pre;right:321px;font-family:"Liberation Sans", sans-serif;'>R$ 2.983,00</div>
<div style='position:absolute;top:898.43px;font-size:15.8px;line-height:15.8px;color:#111;font-weight:700;white-space:pre;left:71.5px;width:1000px;text-align:center;font-family:"Liberation Sans", sans-serif;'>132</div>
<div style='position:absolute;top:898.43px;font-size:15.8px;line-height:15.8px;color:#111;font-weight:700;white-space:pre;left:619.5px;font-family:"Liberation Sans", sans-serif;'>R$</div>
<div style='position:absolute;top:898.43px;font-size:15.8px;line-height:15.8px;color:#111;font-weight:700;white-space:pre;right:134px;font-family:"Liberation Sans", sans-serif;'>10.227,80</div>
<div style='position:absolute;top:898.43px;font-size:15.8px;line-height:15.8px;color:#111;font-weight:700;white-space:pre;right:13.5px;font-family:"Liberation Sans", sans-serif;'>R$ 511,39</div>
<div style='position:absolute;top:927.63px;font-size:15.8px;line-height:15.8px;color:#111;font-weight:700;white-space:pre;left:109px;width:1000px;text-align:center;font-family:"Liberation Sans", sans-serif;'>5%</div>
<div style="position:absolute;left:839px;top:357px;width:2px;height:583px;background:#000;"></div>
<div style="position:absolute;left:839px;top:357px;width:2px;height:36px;background:#1e6b41;"></div>
<div style="position:absolute;left:841px;top:357px;width:10px;height:1px;background:#1e6b41;"></div>
<div style="position:absolute;left:841px;top:391px;width:10px;height:2px;background:#1e6b41;"></div>
<div style="position:absolute;left:841px;top:398px;width:10px;height:1px;background:#e0e0e0;"></div>
<div style="position:absolute;left:841px;top:428px;width:10px;height:1px;background:#e0e0e0;"></div>
<div style="position:absolute;left:841px;top:451px;width:10px;height:1px;background:#e0e0e0;"></div>
<div style="position:absolute;left:841px;top:474px;width:10px;height:1px;background:#e0e0e0;"></div>
<div style="position:absolute;left:841px;top:497px;width:10px;height:1px;background:#e0e0e0;"></div>
<div style="position:absolute;left:841px;top:520px;width:10px;height:1px;background:#e0e0e0;"></div>
<div style="position:absolute;left:841px;top:543px;width:10px;height:1px;background:#e0e0e0;"></div>
<div style="position:absolute;left:841px;top:566px;width:10px;height:1px;background:#e0e0e0;"></div>
<div style="position:absolute;left:841px;top:589px;width:10px;height:1px;background:#e0e0e0;"></div>
<div style="position:absolute;left:841px;top:612px;width:10px;height:1px;background:#e0e0e0;"></div>
<div style="position:absolute;left:841px;top:635px;width:10px;height:1px;background:#e0e0e0;"></div>
<div style="position:absolute;left:841px;top:658px;width:10px;height:1px;background:#e0e0e0;"></div>
<div style="position:absolute;left:841px;top:681px;width:10px;height:1px;background:#e0e0e0;"></div>
<div style="position:absolute;left:841px;top:704px;width:10px;height:1px;background:#e0e0e0;"></div>
<div style="position:absolute;left:841px;top:727px;width:10px;height:1px;background:#e0e0e0;"></div>
<div style="position:absolute;left:841px;top:750px;width:10px;height:1px;background:#e0e0e0;"></div>
<div style="position:absolute;left:841px;top:773px;width:10px;height:1px;background:#e0e0e0;"></div>
<div style="position:absolute;left:841px;top:796px;width:10px;height:1px;background:#e0e0e0;"></div>
<div style="position:absolute;left:841px;top:819px;width:10px;height:1px;background:#e0e0e0;"></div>
<div style="position:absolute;left:841px;top:842px;width:10px;height:1px;background:#e0e0e0;"></div>
<div style="position:absolute;left:841px;top:865px;width:10px;height:1px;background:#e0e0e0;"></div>
<div style="position:absolute;left:841px;top:888px;width:10px;height:1px;background:#e0e0e0;"></div>
<div style="position:absolute;left:841px;top:918px;width:10px;height:1px;background:#e0e0e0;"></div>
<div style="position:absolute;left:0px;top:940px;width:851px;height:6px;background:#e6e6e6;"></div>
<div style="position:absolute;left:103px;top:940px;width:110px;height:6px;background:#ffffff;"></div></body></html>
